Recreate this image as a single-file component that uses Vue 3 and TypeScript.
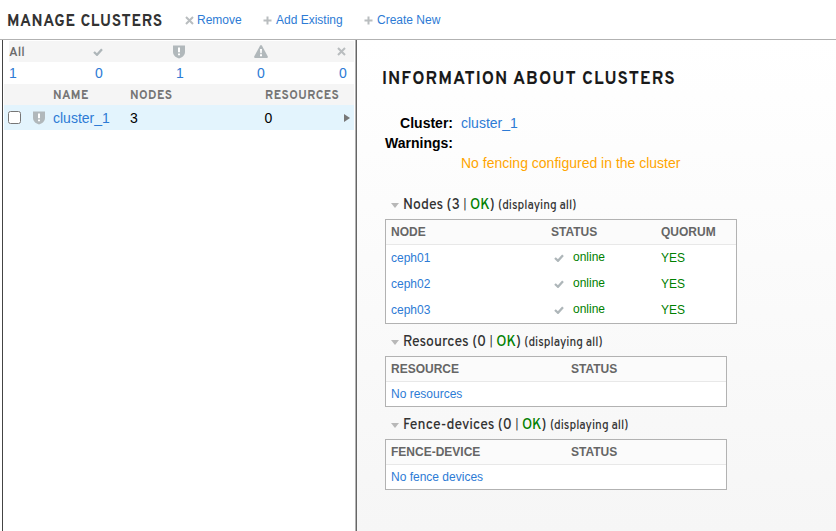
<script setup lang="ts">
interface Panel {
  title: string
  count: number
  column: string
  empty: string
}

const nodes: string[] = ['ceph01', 'ceph02', 'ceph03']
const panels: Panel[] = [
  { title: 'Resources', count: 0, column: 'RESOURCE', empty: 'No resources' },
  { title: 'Fence-devices', count: 0, column: 'FENCE-DEVICE', empty: 'No fence devices' },
]
</script>

<template>
  <div class="page">
    <header class="toolbar">
      <h1><span>MANAGE CLUSTERS</span></h1>
      <a class="action remove"><svg class="icon" viewBox="0 0 9 9"><path d="M1 1L8 8M8 1L1 8" /></svg>Remove</a>
      <a class="action add"><svg class="icon" viewBox="0 0 9 9"><path d="M4.5 .5V8.5M.5 4.5H8.5" /></svg>Add Existing</a>
      <a class="action create"><svg class="icon" viewBox="0 0 9 9"><path d="M4.5 .5V8.5M.5 4.5H8.5" /></svg>Create New</a>
    </header>
    <main>
      <section class="list">
        <div class="icons">
          <span class="all">All</span>
          <svg class="check" viewBox="0 0 10 8"><path d="M1 4L4 6.8L9 1.2" /></svg>
          <svg class="shield" viewBox="0 0 12 14"><path d="M0 .5H12V7C12 10.5 9 12.5 6 13.5C3 12.5 0 10.5 0 7Z" /><path class="mark" d="M5 2.5H7V7.2H5ZM5 8.5H7V10.3H5Z" /></svg>
          <svg class="triangle" viewBox="0 0 14 13"><path d="M6 .8Q7 -.6 8 .8L13.8 11.5Q14.2 13 12.8 13H1.2Q-.2 13 .2 11.5Z" /><path class="mark" d="M6 4H8L7.7 8.3H6.3ZM6 9.3H8V11.2H6Z" /></svg>
          <svg class="cross" viewBox="0 0 9 9"><path d="M1 1L8 8M8 1L1 8" /></svg>
        </div>
        <div class="counts">
          <a>1</a><a>0</a><a>1</a><a>0</a><a>0</a>
        </div>
        <div class="columns head"><span>NAME</span><span>NODES</span><span>RESOURCES</span></div>
        <div class="columns row">
          <input type="checkbox" aria-label="Select cluster_1" />
          <svg class="shield" viewBox="0 0 12 14"><path d="M0 .5H12V7C12 10.5 9 12.5 6 13.5C3 12.5 0 10.5 0 7Z" /><path class="mark" d="M5 2.5H7V7.2H5ZM5 8.5H7V10.3H5Z" /></svg>
          <a>cluster_1</a><span>3</span><span>0</span>
          <i class="arrow"></i>
        </div>
      </section>
      <section class="detail">
        <h2><span>INFORMATION ABOUT CLUSTERS</span></h2>
        <dl>
          <dt>Cluster:</dt><dd><a>cluster_1</a></dd>
          <dt>Warnings:</dt><dd></dd>
          <dt></dt><dd class="warning">No fencing configured in the cluster</dd>
        </dl>
        <h3><i class="caret"></i><span class="title">Nodes (3 <em>|</em> <b>OK</b>) <small>(displaying all)</small></span></h3>
        <div class="table nodes">
          <div class="tr th"><span>NODE</span><span>STATUS</span><span>QUORUM</span></div>
          <div v-for="node in nodes" :key="node" class="tr">
            <a>{{ node }}</a>
            <span class="online"><svg class="check" viewBox="0 0 10 8"><path d="M1 4L4 6.8L9 1.2" /></svg><span>online</span></span>
            <span class="ok">YES</span>
          </div>
        </div>
        <template v-for="panel in panels" :key="panel.title">
          <h3><i class="caret"></i><span class="title">{{ panel.title }} ({{ panel.count }} <em>|</em> <b>OK</b>) <small>(displaying all)</small></span></h3>
          <div class="table small">
            <div class="tr th"><span>{{ panel.column }}</span><span>STATUS</span></div>
            <div class="tr"><a>{{ panel.empty }}</a></div>
          </div>
        </template>
      </section>
    </main>
  </div>
</template>

<style>
body { margin: 0; background: #fff; }
</style>

<style scoped>
* { box-sizing: border-box; }
.page { width: 836px; height: 531px; overflow: hidden; display: flex; flex-direction: column; font: 12px "Liberation Sans", Arial, sans-serif; color: #000; }
a { color: #2d7bd5; }
h1, h2, h3 { margin: 0; font-family: Overpass, Roboto, sans-serif; white-space: nowrap; }
svg { display: block; fill: #b1b8bb; }
.mark { fill: #fff; }
.toolbar { height: 39px; flex: none; display: flex; align-items: center; padding-left: 7px; }
h1 { width: 178px; font-size: 17.5px; line-height: 22px; padding-top: 5px; font-weight: 700; letter-spacing: .8px; color: #333; }
h1 span { display: inline-block; transform: scaleX(.88); transform-origin: 0 50%; }
.action { display: flex; align-items: center; gap: 3px; white-space: nowrap; padding-top: 1px; }
.remove { width: 78px; }
.add { width: 101px; gap: 4px; }
.create { gap: 4px; }
.icon, .cross { width: 9px; height: 9px; }
.icon path, .cross path { fill: none; stroke: #b9bdbf; stroke-width: 2; }
main { flex: 1; display: flex; padding-left: 2px; border-top: 1px solid #b2b2b2; min-height: 0; }
.list { width: 353px; flex: none; border-left: 1px solid #444; padding: 1px 1px 0 1px; background: #fff; }
.icons { height: 21px; margin-left: 5px; background: #f5f5f5; display: grid; align-items: center; grid-template-columns: 84px 80px 81px 83px 1fr; }
.all { font: 600 13px Overpass, Roboto, sans-serif; color: #6c6c6c; padding-top: 3px; line-height: 13px; transform: scaleX(.95); transform-origin: 0 50%; }
.check { width: 10px; height: 8px; }
.check path { fill: none; stroke: #aeb6b9; stroke-width: 2.3; }
.shield { width: 12px; height: 14px; }
.triangle { width: 14px; height: 13px; }
.counts { display: grid; align-items: center; grid-template-columns: 86px 81px 81px 82px 1fr; margin-left: 5px; font-size: 14px; height: 22px; }
.columns { display: grid; grid-template-columns: 77px 134.5px 1fr; align-items: center; }
.head { height: 21px; background: #f5f5f5; padding-left: 49px; font: 700 13.5px Overpass, Roboto, sans-serif; letter-spacing: .5px; color: #757575; line-height: 13px; }
.head span { transform: scaleX(.885); transform-origin: 0 50%; padding-top: 2px; }
.row { height: 25px; background: #e3f4fd; grid-template-columns: 25px 20px 77px 134.5px 1fr 9px; padding-left: 4px; font-size: 14px; }
.row input { width: 13px; height: 13px; margin: 0; }
.arrow { border-left: 6px solid #777; border-top: 4.5px solid transparent; border-bottom: 4.5px solid transparent; width: 0; height: 0; margin-left: -1px; }
.detail { flex: 1; padding: 29px 0 0 28px; border-left: 1px solid #666; box-shadow: -1px 0 #b2b2b2; margin-left: 1px; background: linear-gradient(#fff, #f6f6f6); }
h2 { font-size: 18.5px; line-height: 22px; font-weight: 700; letter-spacing: 1.15px; color: #1a1a1a; margin-left: -3px; }
h2 span { display: inline-block; transform: scaleX(.921); transform-origin: 0 50%; }
dl { margin: 22px 0 0; display: grid; grid-template-columns: 68px 1fr; column-gap: 8px; grid-auto-rows: 20px; font-size: 14px; line-height: 20px; }
dt { font-weight: 700; text-align: right; }
dd { margin: 0; }
.warning { color: orange; }
h3 { display: flex; align-items: center; margin: 22px 0 0 5px; height: 18px; font-size: 15.5px; font-weight: 500; color: #333; }
.title { line-height: 18px; padding-top: 2px; transform: scaleX(.905); transform-origin: 0 50%; }
.caret { border-top: 5px solid #b8b8b8; border-left: 4.5px solid transparent; border-right: 4.5px solid transparent; margin: 3px 4px 0 1px; }
h3 b, .ok, .online { color: #008000; font-weight: inherit; }
em { font: 15px Roboto, sans-serif; }
small { font-size: 13px; }
.table { width: 352px; margin: 6px 0 0; border: 1px solid #b2b2b2; background: #fff; }
.tr { display: grid; grid-template-columns: 160px 110px 1fr; height: 26px; align-items: center; padding-left: 5px; line-height: 14px; }
.th { height: 25px; background: #fbfbfb; border-bottom: 1px solid #e8e8e8; color: #666; font-weight: 700; }
.online { display: flex; align-items: center; gap: 9px; padding-left: 3px; }
.online > span { transform: translateY(-1px); }
.small { width: 342px; }
.small .tr { grid-template-columns: 180px 1fr; height: 24px; }
.small .th { height: 25px; }
.nodes ~ h3 { margin-top: 8px; }
</style>
